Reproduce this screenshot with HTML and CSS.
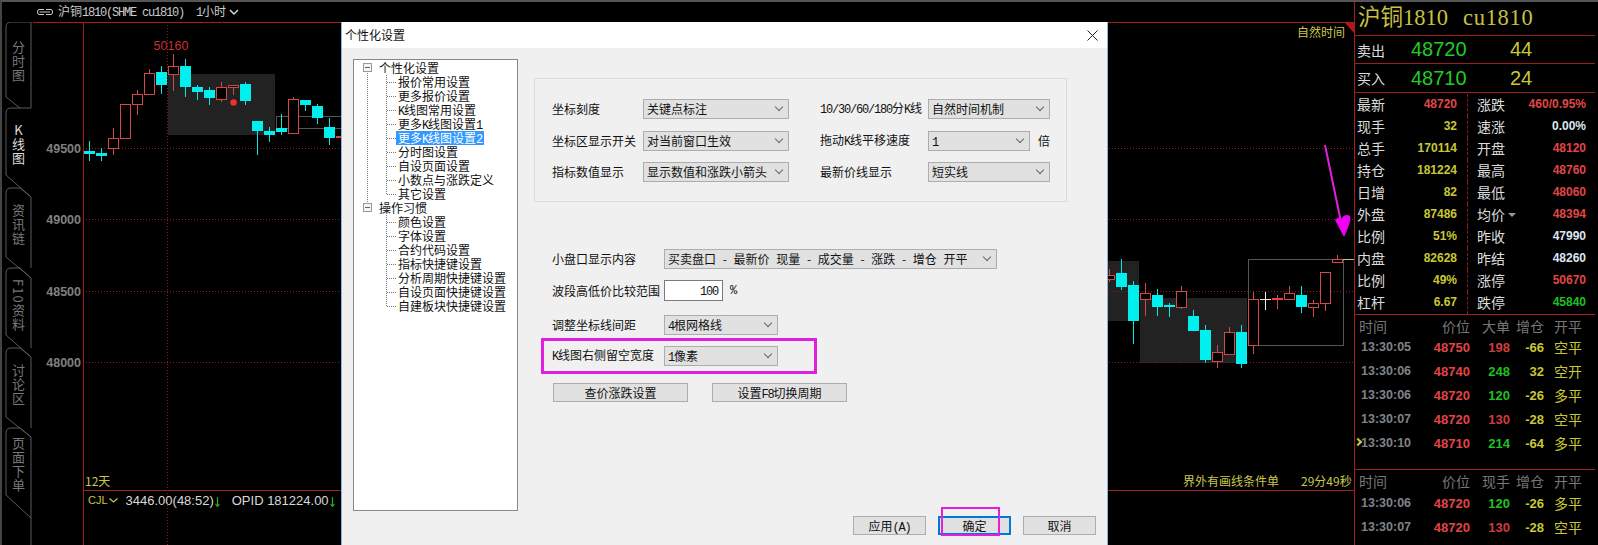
FILE: index.html
```html
<!DOCTYPE html>
<html lang="en">
<head>
    <meta charset="UTF-8">
    <title>个性化设置</title>
    <link rel="stylesheet" href="styles.css">
</head>
<body>
<div class="app">
    <div class="left">
        <!-- Title bar -->
        <div class="topbar">
            <svg class="link-icon" width="16" height="6" viewBox="0 0 16 6"><path d="M7 .5H2Q.5.5.5 3T2 5.5H7M2.5 3H13M9 .5h5Q15.5.5 15.5 3T14 5.5H9" fill="none" stroke="#ccc"/></svg>
            <span class="top-name">沪铜<span class="asc">1810(SHME cu1810)</span></span>
            <span class="top-period"><span class="asc">1</span>小时</span>
            <svg width="10" height="6" viewBox="0 0 10 6"><path d="M1 1l4 4 4-4" fill="none" stroke="#ddd" stroke-width="1.4"/></svg>
        </div>

        <div class="workspace">
            <!-- Tabs -->
            <div class="rail">
                <svg class="rail-lines" width="31" height="523" viewBox="2 22 31 523">
                    <path d="M6 97V27Q6 22 11 22H31V108M6 97L20 108M31 108H11Q6 108 6 113V175L31 197V268M6 193Q6 188 11 188H20L31 197M6 193V257L31 278M6 273Q6 268 11 268H20L31 278V348M6 273V335L31 357V428M6 353Q6 348 11 348H20L31 357M6 353V417L31 437V545M6 433Q6 428 11 428H20L31 437M6 433V495L31 518" fill="none" stroke="#5a5a5a"/>
                </svg>
                <div class="tab tab-first">分时图</div>
                <div class="tab tab-active">K线图</div>
                <div class="tab">资讯链</div>
                <div class="tab">F10资料</div>
                <div class="tab">讨论区</div>
                <div class="tab">页面下单</div>
            </div>

            <!-- Chart -->
            <div class="chart">
                <svg class="chart-svg" width="1321" height="523" viewBox="33 22 1321 523">
                    <rect x="168" y="74" width="107" height="61" fill="#222"/>
                    <rect x="1107" y="261" width="32" height="60" fill="#222"/>
                    <rect x="1140" y="298" width="107" height="65" fill="#222"/>
                    <rect x="276.5" y="116.5" width="70" height="12" fill="none" stroke="#555"/>
                    <rect x="1248.5" y="259.5" width="95" height="86" fill="none" stroke="#555"/>

                    <path class="grid-dot" d="M83 148.5H1354M83 219.5H1354M83 291.5H1354M83 362.5H1354M167.5 22V545"/>
                    <path class="grid-line" d="M33 22.5H1354M83.5 22V545M83 490.5H1354"/>
                    <path d="M1345 23H1354V33Z" fill="#b01818"/>

                    <path class="wick-down" d="M89.5 141V161M101.5 148V161M161.5 66V94M185.5 59V97M197.5 85V100M209.5 87V105M245.5 82V105M257.5 121V155M269.5 127V142M281.5 114V135M305.5 100V111M317.5 104V124M329.5 118V145M1121.5 259V290M1133.5 281V344M1157.5 289V316M1169.5 303V317M1193.5 310V331M1205.5 325V363M1241.5 325V368M1301.5 286V313"/>
                    <path class="wick-up" d="M113.5 128V155M137.5 90V115M149.5 69V73M173.5 54V91M221.5 82V102M233.5 85V95M293.5 97V99M1109.5 269V282M1145.5 283V316M1181.5 286V309M1217.5 345V368M1229.5 327V332M1253.5 292V354M1277.5 295V309M1289.5 286V300M1313.5 300V317M1325.5 303V311M1337.5 255V259"/>
                    <path class="wick-white" d="M1265.5 292V310M1260 299.5H1271"/>

                    <g class="body-down">
                        <rect x="84" y="151" width="11" height="3"/>
                        <rect x="96" y="153" width="11" height="3"/>
                        <rect x="156" y="72" width="11" height="13"/>
                        <rect x="180" y="66" width="11" height="21"/>
                        <rect x="192" y="87" width="11" height="5"/>
                        <rect x="204" y="90" width="11" height="8"/>
                        <rect x="240" y="84" width="11" height="17"/>
                        <rect x="252" y="121" width="11" height="10"/>
                        <rect x="264" y="131" width="11" height="4"/>
                        <rect x="276" y="128" width="11" height="4"/>
                        <rect x="300" y="100" width="11" height="5"/>
                        <rect x="312" y="106" width="11" height="12"/>
                        <rect x="324" y="127" width="11" height="11"/>
                        <rect x="1116" y="273" width="11" height="14"/>
                        <rect x="1128" y="285" width="11" height="36"/>
                        <rect x="1152" y="295" width="11" height="12"/>
                        <rect x="1164" y="305" width="11" height="2"/>
                        <rect x="1188" y="316" width="11" height="15"/>
                        <rect x="1200" y="330" width="11" height="30"/>
                        <rect x="1236" y="332" width="11" height="32"/>
                        <rect x="1296" y="295" width="11" height="12"/>
                    </g>
                    <g class="body-up">
                        <rect x="108.5" y="138.5" width="10" height="10"/>
                        <rect x="120.5" y="104.5" width="10" height="34"/>
                        <rect x="132.5" y="94.5" width="10" height="10"/>
                        <rect x="144.5" y="73.5" width="10" height="21"/>
                        <rect x="168.5" y="66.5" width="10" height="8"/>
                        <rect x="216.5" y="87.5" width="10" height="12"/>
                        <rect x="228.5" y="85.5" width="10" height="2"/>
                        <rect x="288.5" y="99.5" width="10" height="34"/>
                        <rect x="1107.5" y="275.5" width="7" height="4"/>
                        <rect x="1140.5" y="293.5" width="10" height="6"/>
                        <rect x="1176.5" y="291.5" width="10" height="16"/>
                        <rect x="1212.5" y="352.5" width="10" height="9"/>
                        <rect x="1224.5" y="332.5" width="10" height="22"/>
                        <rect x="1248.5" y="299.5" width="10" height="46"/>
                        <rect x="1284.5" y="293.5" width="10" height="6"/>
                        <rect x="1308.5" y="303.5" width="10" height="4"/>
                        <rect x="1320.5" y="272.5" width="10" height="31"/>
                        <rect x="1332.5" y="259.5" width="10" height="3"/>
                    </g>
                    <rect x="1272" y="298" width="11" height="2" fill="#f04040"/>
                    <rect x="336" y="136" width="6" height="2" fill="#e04040"/>
                    <circle cx="233.5" cy="102.5" r="3.2" fill="#f03030"/>
                    <path d="M1343 259.5H1354" stroke="#c8c860"/>

                    <path d="M1325 145L1341 222" stroke="#e020e0" stroke-width="2"/>
                    <path d="M1335 220Q1339 216 1341 219Q1345 213 1350 216Q1352 220 1344 237Z" fill="#f000f0"/>

                    <text class="peak" x="171" y="50" text-anchor="middle">50160</text>
                    <g class="axis" text-anchor="end">
                        <text x="81" y="153">49500</text>
                        <text x="81" y="224">49000</text>
                        <text x="81" y="296">48500</text>
                        <text x="81" y="367">48000</text>
                    </g>
                    <g class="note">
                        <text x="1297" y="37">自然时间</text>
                        <text x="85" y="486">12天</text>
                        <text x="1183" y="486">界外有画线条件单</text>
                        <text x="1301" y="486">29分49秒</text>
                    </g>
                </svg>

                <!-- Indicator line under the chart -->
                <div class="indicator">
                    <span class="ind-name">CJL</span>
                    <svg width="9" height="5" viewBox="0 0 9 5"><path d="M.5.5l4 3.5 4-3.5" fill="none" stroke="#c8c840" stroke-width="1.2"/></svg>
                    <span class="ind-val ind-first">3446.00(48:52)</span>
                    <svg class="ind-arrow" width="5" height="10" viewBox="0 0 5 10"><path d="M2.5 0V9M.5 7l2 2.500 2-2.500" fill="none" stroke="#20b020" stroke-width="1.2"/></svg>
                    <span class="ind-val ind-second">OPID 181224.00</span>
                    <svg class="ind-arrow" width="5" height="10" viewBox="0 0 5 10"><path d="M2.5 0V9M.5 7l2 2.500 2-2.500" fill="none" stroke="#20b020" stroke-width="1.2"/></svg>
                </div>
            </div>
        </div>
    </div>

    <!-- Quote panel -->
    <div class="panel">
        <div class="panel-title">沪铜1810<span class="panel-code">cu1810</span></div>
        <div class="book-row book-ask"><span class="book-label">卖出</span><span class="book-price">48720</span><span class="book-vol">44</span></div>
        <div class="book-row book-bid"><span class="book-label">买入</span><span class="book-price">48710</span><span class="book-vol">24</span></div>

        <div class="quote">
            <div class="cell"><span>最新</span><b class="red">48720</b></div>
            <div class="cell cell-r"><span>涨跌</span><b class="red">460/0.95%</b></div>
            <div class="cell"><span>现手</span><b class="yel">32</b></div>
            <div class="cell cell-r"><span>速涨</span><b class="wht">0.00%</b></div>
            <div class="cell"><span>总手</span><b class="yel">170114</b></div>
            <div class="cell cell-r"><span>开盘</span><b class="red">48120</b></div>
            <div class="cell"><span>持仓</span><b class="yel">181224</b></div>
            <div class="cell cell-r"><span>最高</span><b class="red">48760</b></div>
            <div class="cell"><span>日增</span><b class="yel">82</b></div>
            <div class="cell cell-r"><span>最低</span><b class="red">48060</b></div>
            <div class="cell"><span>外盘</span><b class="yel">87486</b></div>
            <div class="cell cell-r"><span class="has-drop">均价</span><b class="red">48394</b></div>
            <div class="cell"><span>比例</span><b class="yel">51%</b></div>
            <div class="cell cell-r"><span>昨收</span><b class="wht">47990</b></div>
            <div class="cell"><span>内盘</span><b class="yel">82628</b></div>
            <div class="cell cell-r"><span>昨结</span><b class="wht">48260</b></div>
            <div class="cell"><span>比例</span><b class="yel">49%</b></div>
            <div class="cell cell-r"><span>涨停</span><b class="red">50670</b></div>
            <div class="cell"><span>杠杆</span><b class="yel">6.67</b></div>
            <div class="cell cell-r"><span>跌停</span><b class="grn">45840</b></div>
        </div>

        <div class="ticks ticks-big">
            <div class="tick-head"><span class="head-time">时间</span><span>价位</span><span>大单</span><span>增仓</span><span class="open">开平</span></div>
            <div class="tick"><span class="time">13:30:05</span><b class="red">48750</b><b class="dkred">198</b><b class="yel">-66</b><span class="open">空平</span></div>
            <div class="tick"><span class="time">13:30:06</span><b class="red">48740</b><b class="grn">248</b><b class="yel">32</b><span class="open">空开</span></div>
            <div class="tick"><span class="time">13:30:06</span><b class="red">48720</b><b class="grn">120</b><b class="yel">-26</b><span class="open">多平</span></div>
            <div class="tick"><span class="time">13:30:07</span><b class="red">48720</b><b class="dkred">130</b><b class="yel">-28</b><span class="open">空平</span></div>
            <div class="tick tick-mark"><span class="time">13:30:10</span><b class="red">48710</b><b class="grn">214</b><b class="yel">-64</b><span class="open">多平</span></div>
        </div>
        <div class="ticks ticks-small">
            <div class="tick-head"><span class="head-time">时间</span><span>价位</span><span>现手</span><span>增仓</span><span class="open">开平</span></div>
            <div class="tick"><span class="time">13:30:06</span><b class="red">48720</b><b class="grn">120</b><b class="yel">-26</b><span class="open">多平</span></div>
            <div class="tick"><span class="time">13:30:07</span><b class="red">48720</b><b class="dkred">130</b><b class="yel">-28</b><span class="open">空平</span></div>
        </div>
    </div>

    <!-- Settings dialog -->
    <div class="dialog">
        <div class="dlg-title">
            <span>个性化设置</span>
            <svg class="dlg-close" width="11" height="11" viewBox="0 0 11 11"><path d="M.5.5l10 10M10.5.5l-10 10" stroke="#222"/></svg>
        </div>
        <div class="dlg-body">
            <div class="tree">
                <div class="tree-group tree-group-line">
                    <div class="tree-root"><i class="expander"></i>个性化设置</div>
                    <ul class="tree-list">
                        <li>报价常用设置</li>
                        <li>更多报价设置</li>
                        <li><span class="asc">K</span>线图常用设置</li>
                        <li>更多<span class="asc">K</span>线图设置<span class="asc">1</span></li>
                        <li><span class="tree-sel">更多<span class="asc">K</span>线图设置<span class="asc">2</span></span></li>
                        <li>分时图设置</li>
                        <li>自设页面设置</li>
                        <li>小数点与涨跌定义</li>
                        <li>其它设置</li>
                    </ul>
                </div>
                <div class="tree-group">
                    <div class="tree-root"><i class="expander"></i>操作习惯</div>
                    <ul class="tree-list">
                        <li>颜色设置</li>
                        <li>字体设置</li>
                        <li>合约代码设置</li>
                        <li>指标快捷键设置</li>
                        <li>分析周期快捷键设置</li>
                        <li>自设页面快捷键设置</li>
                        <li>自建板块快捷键设置</li>
                    </ul>
                </div>
            </div>

            <div class="form">
                <div class="group">
                    <span>坐标刻度</span>
                    <div class="combo">关键点标注</div>
                    <span class="group-label"><span class="asc">10/30/60/180</span>分<span class="asc">K</span>线</span>
                    <div class="combo">自然时间机制</div>

                    <span>坐标区显示开关</span>
                    <div class="combo">对当前窗口生效</div>
                    <span class="group-label">拖动<span class="asc">K</span>线平移速度</span>
                    <div class="combo-unit"><div class="combo combo-speed"><span class="asc">1</span></div><span>倍</span></div>

                    <span>指标数值显示</span>
                    <div class="combo">显示数值和涨跌小箭头</div>
                    <span class="group-label">最新价线显示</span>
                    <div class="combo">短实线</div>
                </div>

                <div class="opt opt-display">
                    <span class="opt-label">小盘口显示内容</span>
                    <div class="combo combo-wide"><span class="combo-pre">买卖盘口 - 最新价 现量 - 成交量 - 涨跌 - 增仓 开平</span></div>
                </div>
                <div class="opt opt-range">
                    <span class="opt-label">波段高低价比较范围</span>
                    <div class="input"><span class="asc">100</span></div>
                    <span class="asc opt-pct">%</span>
                </div>
                <div class="opt opt-grid">
                    <span class="opt-label">调整坐标线间距</span>
                    <div class="combo combo-mid"><span><span class="asc">4</span>根网格线</span></div>
                </div>
                <div class="opt opt-marked">
                    <span class="opt-label"><span class="asc">K</span>线图右侧留空宽度</span>
                    <div class="combo combo-mid"><span><span class="asc">1</span>像素</span></div>
                </div>
                <div class="opt-buttons">
                    <div class="btn btn-wide">查价涨跌设置</div>
                    <div class="btn btn-wide">设置<span class="asc">F8</span>切换周期</div>
                </div>
            </div>
        </div>
        <div class="dlg-footer">
            <div class="btn btn-foot">应用<span class="asc">(A)</span></div>
            <div class="btn btn-foot btn-ok">确定</div>
            <div class="btn btn-foot">取消</div>
        </div>
    </div>
</div>
</body>
</html>
```

FILE: styles.css
```css
html, body {
    margin: 0;
    padding: 0;
    width: 1598px;
    height: 545px;
    overflow: hidden;
    background-color: #000;
    font-family: "Noto Sans CJK SC", "Liberation Sans", sans-serif;
    font-size: 12px;
}

/* SimSun style half width latin */
.asc {
    font-family: "Liberation Mono", "Noto Sans CJK SC", monospace;
    letter-spacing: -1.2px;
    white-space: pre;
}

.app {
    position: relative;
    display: flex;
    width: 1598px;
    height: 545px;
    box-sizing: border-box;
    border-top: 2px solid #555;
    border-left: 2px solid #444;
    background-color: #000;
}

.left {
    width: 1352px;
    display: flex;
    flex-direction: column;
}

/* Title bar */
.topbar {
    height: 20px;
    display: flex;
    align-items: center;
    padding-left: 35px;
    color: #ccc;
    line-height: 14px;
}

.link-icon {
    margin-right: 5px;
}

.top-name {
    width: 138px;
}

.top-period {
    width: 33px;
}

.workspace {
    display: flex;
    flex: 1;
}

/* Left tabs */
.rail {
    position: relative;
    width: 31px;
    height: 523px;
    flex: none;
}

.rail-lines {
    position: absolute;
    left: 0;
    top: 0;
}

.tab {
    height: 80px;
    box-sizing: border-box;
    padding: 0 0 6px 9px;
    display: flex;
    align-items: center;
    writing-mode: vertical-rl;
    justify-content: center;
    color: #777;
    font-size: 13px;
    line-height: 15px;
    letter-spacing: 1px;
}

.tab-first {
    height: 86px;
    padding-bottom: 6px;
}

.tab-active {
    color: #ddd;
    text-orientation: upright;
}

/* Chart */
.chart {
    position: relative;
    width: 1321px;
    height: 523px;
}

.chart-svg {
    display: block;
}

.grid-dot {
    fill: none;
    stroke: #8c1c1c;
    stroke-dasharray: 1 2;
}

.grid-line {
    fill: none;
    stroke: #a01e1e;
}

.wick-down {
    fill: none;
    stroke: #00e8e8;
}

.wick-up {
    fill: none;
    stroke: #d04848;
}

.wick-white {
    fill: none;
    stroke: #eee;
}

.body-down rect {
    fill: #00f0f0;
}

.body-up rect {
    fill: #000;
    stroke: #d04848;
}

.peak {
    fill: #c83030;
    font-family: "Liberation Sans", sans-serif;
    font-size: 12.5px;
}

.axis text {
    fill: #808080;
    font-family: "Liberation Sans", sans-serif;
    font-size: 12.5px;
    font-weight: bold;
}

.note text {
    fill: #c8c84a;
    font-size: 12px;
}

.indicator {
    position: absolute;
    left: 55px;
    top: 469px;
    display: flex;
    align-items: center;
    height: 18px;
    font-family: "Liberation Sans", sans-serif;
    font-size: 13px;
    color: #d8d8d8;
    white-space: nowrap;
}

.ind-name {
    color: #c8c840;
    font-size: 11px;
    margin-right: 1px;
}

.ind-first {
    margin-left: 8px;
}

.ind-second {
    margin-left: 12px;
}

.ind-arrow {
    margin: 4px 0 0 1px;
}

/* Right panel */
.panel {
    width: 244px;
    box-sizing: border-box;
    border-left: 1px solid #a01e1e;
    padding-right: 3px;
    color: #ddd;
    flex: none;
}

.panel-title {
    height: 33px;
    line-height: 32px;
    padding-left: 3px;
    font-family: "Liberation Serif", "Noto Sans CJK SC", serif;
    font-size: 22.5px;
    color: #c8c040;
    border-bottom: 1px solid #a01e1e;
    white-space: nowrap;
}

.panel-code {
    margin-left: 15px;
    letter-spacing: 0.7px;
}

.book-row {
    display: flex;
    align-items: center;
    border-bottom: 1px solid #a01e1e;
    padding-left: 2px;
}

.book-ask {
    height: 27px;
}

.book-bid {
    height: 28px;
}

.book-label {
    width: 54px;
    font-size: 14px;
}

.book-price {
    width: 99px;
    font-family: "Liberation Sans", sans-serif;
    font-size: 20px;
    color: #22cc22;
}

.book-vol {
    font-family: "Liberation Sans", sans-serif;
    font-size: 20px;
    color: #c8c832;
}

.quote {
    display: grid;
    grid-template-columns: 112px 1fr;
    grid-auto-rows: 22px;
    padding-top: 1px;
    border-bottom: 1px solid #a01e1e;
}

.cell {
    display: flex;
    justify-content: space-between;
    align-items: center;
    padding: 0 10px 2px 2px;
    font-size: 14px;
    line-height: 20px;
}

.cell b {
    font-family: "Liberation Sans", sans-serif;
    font-size: 12px;
}

.cell-r {
    border-left: 1px dashed #8c1c1c;
    padding: 0 9px 2px 9px;
}

.has-drop {
    position: relative;
}

.has-drop::after {
    content: "";
    position: absolute;
    left: 31px;
    top: 9px;
    border-left: 4.5px solid transparent;
    border-right: 4.5px solid transparent;
    border-top: 4px solid #999;
}

.red { color: #e04646; }
.dkred { color: #d03c3c; }
.yel { color: #c8c832; }
.wht { color: #dde6f0; }
.grn { color: #20c020; }

/* Tick tables */
.ticks {
    box-sizing: border-box;
}

.ticks-big {
    height: 155px;
    border-bottom: 1px solid #a01e1e;
}

.tick-head,
.tick {
    display: grid;
    grid-template-columns: 60px 49px 40px 34px 1fr;
    padding-left: 6px;
    align-items: center;
}

.tick-head {
    height: 14px;
    padding-top: 4px;
    margin-bottom: 2px;
    color: #777;
    font-size: 14px;
    line-height: 14px;
    text-align: right;
}

.ticks-small .tick-head {
    margin-bottom: 3px;
}

.head-time {
    text-align: left;
    margin-left: -2px;
}

.tick {
    position: relative;
    height: 24px;
    font-family: "Liberation Sans", sans-serif;
    font-size: 13px;
    text-align: right;
}

.tick .time {
    color: #7f8388;
    text-align: left;
    font-size: 12.5px;
    font-weight: bold;
}

.open {
    font-family: "Noto Sans CJK SC", sans-serif;
    font-size: 14px;
    text-align: left;
    padding-left: 10px;
}

.tick .open {
    color: #c8c832;
}

.tick-mark::before {
    content: "";
    position: absolute;
    left: 0;
    top: 8px;
    width: 4px;
    height: 4px;
    border-top: 2px solid #c8c832;
    border-right: 2px solid #c8c832;
    transform: rotate(45deg);
}

/* Dialog */
.dialog {
    position: absolute;
    left: 339px;
    top: 20px;
    width: 767px;
    height: 523px;
    box-sizing: border-box;
    border-left: 1px solid #8db4dc;
    border-right: 1px solid #8db4dc;
    background-color: #f0f0f0;
    color: #111;
    display: flex;
    flex-direction: column;
    line-height: 14px;
}

.dlg-title {
    height: 26px;
    flex: none;
    background-color: #fff;
    display: flex;
    align-items: center;
    justify-content: space-between;
    padding: 0 9px 0 3px;
}

.dlg-body {
    display: flex;
    gap: 16px;
    padding: 11px 0 0 11px;
}

.tree {
    width: 165px;
    height: 452px;
    flex: none;
    box-sizing: border-box;
    border: 1px solid #828790;
    background-color: #fff;
    padding: 1px 0 0 10px;
}

.tree-group {
    position: relative;
}

.tree-group-line::before {
    content: "";
    position: absolute;
    left: 3px;
    top: 12px;
    bottom: -3px;
    border-left: 1px dotted #777;
}

.tree-root {
    height: 14px;
    padding-left: 15px;
    position: relative;
}

.expander {
    position: absolute;
    left: -1px;
    top: 2px;
    width: 9px;
    height: 9px;
    box-sizing: border-box;
    border: 1px solid #999;
    background: linear-gradient(#666, #666) center / 5px 1px no-repeat #f4f4f4;
}

.tree-list {
    position: relative;
    list-style: none;
    margin: 0;
    padding: 0 0 0 34px;
}

.tree-list::before {
    content: "";
    position: absolute;
    left: 22px;
    top: 0;
    bottom: 7px;
    border-left: 1px dotted #777;
}

.tree-list li {
    position: relative;
    height: 14px;
    white-space: nowrap;
}

.tree-list li::before {
    content: "";
    position: absolute;
    left: -11px;
    top: 7px;
    width: 9px;
    border-top: 1px dotted #777;
}

.tree-sel {
    display: inline-block;
    height: 14px;
    margin-left: -2px;
    padding: 0 2px;
    background-color: #3399ff;
    color: #fff;
}

.form {
    width: 533px;
    padding-top: 19px;
}

/* Top group box */
.group {
    box-sizing: border-box;
    width: 533px;
    height: 124px;
    border: 1px solid #dcdcdc;
    padding: 20px 0 0 17px;
    display: grid;
    grid-template-columns: 91px 146px 139px 122px;
    grid-auto-rows: 20px;
    row-gap: 11.5px;
    align-items: center;
}

.group-label {
    margin-left: 31px;
    white-space: nowrap;
}

.combo {
    position: relative;
    box-sizing: border-box;
    height: 20px;
    line-height: 18px;
    background-color: #e1e1e1;
    border: 1px solid #adadad;
    padding-left: 3px;
    white-space: nowrap;
}

.combo::after {
    content: "";
    position: absolute;
    right: 6px;
    top: 4px;
    width: 5px;
    height: 5px;
    border-right: 1px solid #666;
    border-bottom: 1px solid #666;
    transform: rotate(45deg);
}

.combo-unit {
    display: flex;
    justify-content: space-between;
    align-items: center;
}

.combo-speed {
    width: 102px;
}

.opt {
    display: flex;
    align-items: center;
    padding-left: 18px;
}

.opt-label {
    width: 112px;
    flex: none;
    white-space: nowrap;
}

.opt-display { margin-top: 47px; }
.opt-range { margin-top: 11px; }
.opt-grid { margin-top: 14px; }
.opt-marked { margin-top: 11px; position: relative; }

.combo-wide {
    width: 333px;
}

.combo-pre {
    white-space: pre;
    word-spacing: 4px;
}

.combo-mid {
    width: 114px;
}

.input {
    box-sizing: border-box;
    width: 59px;
    height: 21px;
    background-color: #fff;
    border: 1px solid #7a7a7a;
    text-align: right;
    padding-right: 4px;
    line-height: 18px;
}

.opt-pct {
    margin-left: 7px;
}

/* Magenta marks from the screenshot */
.opt-marked::after {
    content: "";
    position: absolute;
    left: 7px;
    top: -8px;
    width: 276px;
    height: 36px;
    box-sizing: border-box;
    border: 3px solid #e020e0;
}

.opt-buttons {
    display: flex;
    gap: 24px;
    margin: 17px 0 0 19px;
}

.btn {
    box-sizing: border-box;
    height: 19px;
    line-height: 17px;
    text-align: center;
    background-color: #e1e1e1;
    border: 1px solid #adadad;
}

.btn-wide {
    width: 135px;
}

.dlg-footer {
    display: flex;
    justify-content: flex-end;
    gap: 12px;
    margin-top: 5px;
    padding-right: 11px;
}

.btn-foot {
    width: 73px;
}

.btn-ok {
    position: relative;
    border: 2px solid #0078d7;
    line-height: 15px;
}

.btn-ok::after {
    content: "";
    position: absolute;
    left: 1px;
    top: -11px;
    width: 59px;
    height: 29px;
    box-sizing: border-box;
    border: 2px solid #e020e0;
}
```
